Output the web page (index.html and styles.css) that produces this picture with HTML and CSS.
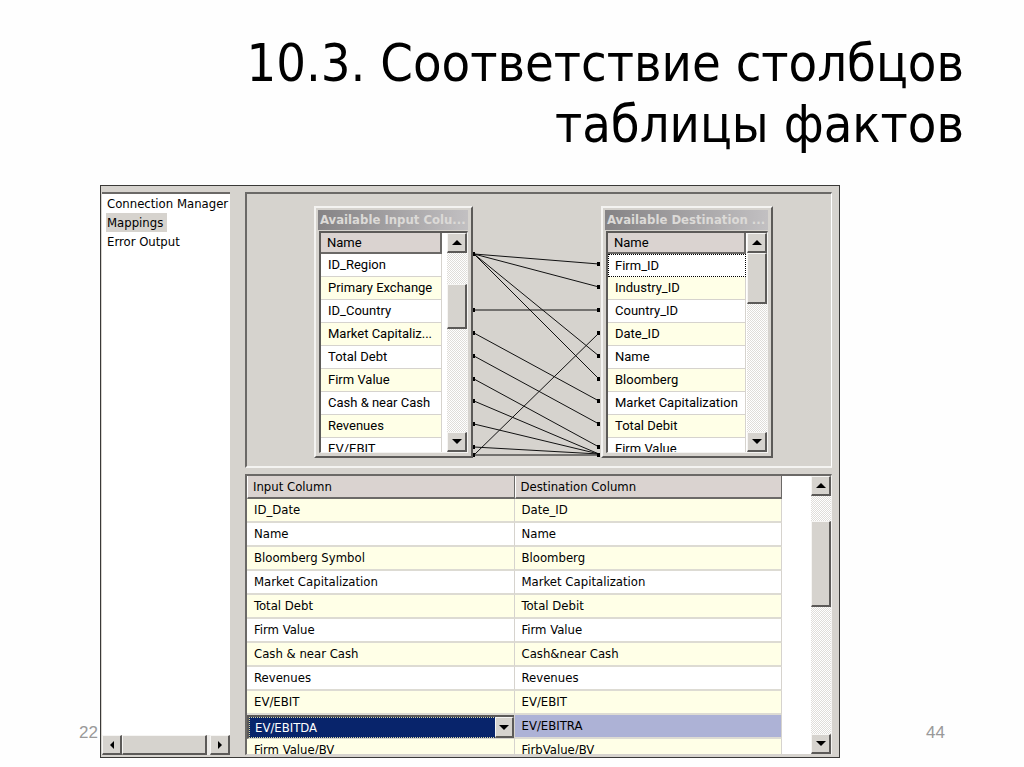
FILE: index.html
```html
<!DOCTYPE html>
<html lang="ru">
<head>
<meta charset="utf-8">
<title>10.3. Соответствие столбцов таблицы фактов</title>
<link rel="stylesheet" href="styles.css">
</head>
<body>
<main class="slide">
  <h1 class="title">10.3. Соответствие столбцов<br>таблицы фактов</h1>
  <div class="stage">
    <span class="mark mark-left">22</span>
    <section class="editor">
      <div class="side">
        <nav class="pages">
          <a href="#">Connection Manager</a>
          <a href="#" class="current">Mappings</a>
          <a href="#">Error Output</a>
        </nav>
        <div class="hscroll">
          <button class="sb" aria-label="Scroll left"><svg width="6" height="8" viewBox="0 0 6 8"><path d="M5 0v8L1 4z"/></svg></button>
          <span class="thumb"></span>
          <button class="sb" aria-label="Scroll right"><svg width="6" height="8" viewBox="0 0 6 8"><path d="M1 0v8l4-4z"/></svg></button>
        </div>
      </div>
      <div class="work">
        <div class="diagram">
          <div class="win win-input">
            <div class="caption">Available Input Colu...</div>
            <div class="list">
              <table class="names">
                <tr><th>Name</th></tr>
                <tr><td>ID_Region</td></tr>
                <tr><td>Primary Exchange</td></tr>
                <tr><td>ID_Country</td></tr>
                <tr><td>Market Capitaliz...</td></tr>
                <tr><td>Total Debt</td></tr>
                <tr><td>Firm Value</td></tr>
                <tr><td>Cash &amp; near Cash</td></tr>
                <tr><td>Revenues</td></tr>
                <tr><td>EV/EBIT</td></tr>
              </table>
              <div class="vscroll">
                <button class="sb" aria-label="Scroll up"><svg width="10" height="5" viewBox="0 0 10 5"><path d="M0 5h10L5 0z"/></svg></button>
                <span class="thumb thumb-mid"></span>
                <button class="sb sb-end" aria-label="Scroll down"><svg width="10" height="5" viewBox="0 0 10 5"><path d="M0 0h10L5 5z"/></svg></button>
              </div>
            </div>
          </div>
          <svg class="wires" width="128" height="252" viewBox="0 0 128 252">
            <g class="line">
              <path d="M1 48L126 58M1 48L126 81M1 48L126 150M1 48L126 173M1 104H126M1 127L126 195M1 150L126 218M1 173L126 241M1 195L126 248M1 218L126 248M1 241L126 248M1 249H126M1 249L126 127"/>
            </g>
            <path d="M0 46h2v4H0zM0 102h2v4H0zM0 125h2v4H0zM0 148h2v4H0zM0 171h2v4H0zM0 193h2v4H0zM0 216h2v4H0zM0 239h2v4H0zM0 247h2v4H0zM124 56h3v4h-3zM124 79h3v4h-3zM124 102h3v4h-3zM124 125h3v4h-3zM124 148h3v4h-3zM124 171h3v4h-3zM124 193h3v4h-3zM124 216h3v4h-3zM124 239h3v4h-3zM124 247h3v4h-3z"/>
          </svg>
          <div class="win win-dest">
            <div class="caption">Available Destination ...</div>
            <div class="list">
              <table class="names">
                <tr><th>Name</th></tr>
                <tr><td class="focus">Firm_ID</td></tr>
                <tr><td>Industry_ID</td></tr>
                <tr><td>Country_ID</td></tr>
                <tr><td>Date_ID</td></tr>
                <tr><td>Name</td></tr>
                <tr><td>Bloomberg</td></tr>
                <tr><td>Market Capitalization</td></tr>
                <tr><td>Total Debit</td></tr>
                <tr><td>Firm Value</td></tr>
              </table>
              <div class="vscroll">
                <button class="sb" aria-label="Scroll up"><svg width="10" height="5" viewBox="0 0 10 5"><path d="M0 5h10L5 0z"/></svg></button>
                <span class="thumb thumb-top"></span>
                <button class="sb sb-end" aria-label="Scroll down"><svg width="10" height="5" viewBox="0 0 10 5"><path d="M0 0h10L5 5z"/></svg></button>
              </div>
            </div>
          </div>
        </div>
        <div class="grid">
          <table class="map">
            <thead><tr><th>Input Column</th><th>Destination Column</th></tr></thead>
            <tbody>
              <tr><td>ID_Date</td><td>Date_ID</td></tr>
              <tr><td>Name</td><td>Name</td></tr>
              <tr><td>Bloomberg Symbol</td><td>Bloomberg</td></tr>
              <tr><td>Market Capitalization</td><td>Market Capitalization</td></tr>
              <tr><td>Total Debt</td><td>Total Debit</td></tr>
              <tr><td>Firm Value</td><td>Firm Value</td></tr>
              <tr><td>Cash &amp; near Cash</td><td>Cash&amp;near Cash</td></tr>
              <tr><td>Revenues</td><td>Revenues</td></tr>
              <tr><td>EV/EBIT</td><td>EV/EBIT</td></tr>
              <tr class="active">
                <td><div class="combo"><select aria-label="Input Column"><option>EV/EBITDA</option></select><span class="drop"><svg width="10" height="5" viewBox="0 0 10 5"><path d="M0 0h10L5 5z"/></svg></span></div></td>
                <td>EV/EBITRA</td>
              </tr>
              <tr><td>Firm Value/BV</td><td>FirbValue/BV</td></tr>
            </tbody>
          </table>
          <div class="vscroll">
            <button class="sb" aria-label="Scroll up"><svg width="10" height="5" viewBox="0 0 10 5"><path d="M0 5h10L5 0z"/></svg></button>
            <span class="thumb thumb-grid"></span>
            <button class="sb sb-end" aria-label="Scroll down"><svg width="10" height="5" viewBox="0 0 10 5"><path d="M0 0h10L5 5z"/></svg></button>
          </div>
        </div>
      </div>
    </section>
    <span class="mark mark-right">44</span>
  </div>
</main>
</body>
</html>
```
FILE: styles.css
```css
* { box-sizing: border-box; }
body {
  margin: 0;
  background: #fefefe;
  color: #000;
  font-family: "DejaVu Sans Condensed", "DejaVu Sans", sans-serif;
  font-stretch: condensed;
  font-size: 13px;
  line-height: 16px;
}
.slide { padding: 33px 0 8px; }
.title {
  margin: 0 60px 30px 0;
  text-align: right;
  font-weight: 400;
  font-size: 52px;
  line-height: 61px;
}
.stage {
  display: grid;
  grid-template-columns: 100px minmax(0, 1fr) 184px;
  align-items: end;
}
.mark {
  font: 17px/20px "Liberation Sans", sans-serif;
  color: #999;
  padding-bottom: 15px;
}
.mark-left { text-align: right; padding-right: 2px; }
.mark-right { padding-left: 86px; }

.editor {
  display: flex;
  gap: 15px;
  padding: 6px 7px 2px 1px;
  background: #d6d3ce;
  border: 1px solid #3a3937;
}
.side {
  flex: none;
  width: 128px;
  display: flex;
  flex-direction: column;
  justify-content: space-between;
  background: #fff;
  border-top: 2px solid #6b6967;
}
.pages {
  display: flex;
  flex-direction: column;
  align-items: flex-start;
  white-space: nowrap;
  padding: 0 0 0 4px;
}
.pages a {
  color: #000;
  text-decoration: none;
  line-height: 19px;
  padding: 0 2px 0 1px;
}
.pages .current { background: #d6d3ce; padding-right: 4px; }

.hscroll { display: flex; height: 20px; background: #eceae7; }
.hscroll .thumb { flex: 1; margin-right: 3px; }
.thumb, .sb {
  display: block;
  background: #d6d3ce;
  border: 1px solid #f6f5f3;
  border-right: 2px solid #5c5a58;
  border-bottom: 2px solid #5c5a58;
}
.sb {
  flex: none;
  width: 20px;
  height: 20px;
  padding: 0;
  display: grid;
  place-items: center;
}
.vscroll {
  flex: none;
  width: 20px;
  display: flex;
  flex-direction: column;
  background: repeating-conic-gradient(#fff 0 25%, #dfddd9 0 50%) 0 0 / 2px 2px;
}
.sb-end { margin-top: auto; }
.thumb-mid { height: 45px; margin-top: 31px; }
.thumb-top { height: 51px; }
.thumb-grid { height: 86px; margin-top: 25px; }

.work {
  flex: 1;
  min-width: 0;
  display: flex;
  flex-direction: column;
  gap: 6px;
}
.diagram {
  display: flex;
  align-items: flex-start;
  padding: 12px 0 8px 67px;
  border: 2px solid #6b6967;
  border-right: 1px solid #fff;
  border-bottom: 2px solid #f4f3f1;
}
.win {
  flex: none;
  padding: 2px 3px 3px 2px;
  background: #d6d3ce;
  border: 2px solid #f4f3f1;
  border-right: 2px solid #5c5a58;
  border-bottom: 2px solid #5c5a58;
}
.win-input { width: 159px; }
.win-dest { width: 172px; }
.caption {
  height: 20px;
  padding: 0 2px;
  overflow: hidden;
  white-space: nowrap;
  background: linear-gradient(90deg, #858385, #c2c0c2);
  color: #dcdad7;
  font-weight: 700;
  line-height: 20px;
}
.list {
  display: flex;
  justify-content: space-between;
  height: 222px;
  margin: 1px 0 0 1px;
  overflow: hidden;
  background: #fff;
  border: 2px solid #5c5a58;
  border-right: 1px solid #f4f3f1;
  border-bottom: 1px solid #f4f3f1;
}
table { border-collapse: separate; border-spacing: 0; }
th, td { text-align: left; font-weight: 400; white-space: nowrap; }
.names {
  align-self: flex-start;
  width: 121px;
  font: 13px/16px Roboto, "Liberation Sans", sans-serif;
}
.win-dest .names { width: 135px; }
.names th {
  height: 21px;
  padding: 0 6px;
  background: #dad3d0;
  border-right: 2px solid #6b6967;
  border-bottom: 2px solid #6b6967;
}
.names td {
  height: 23px;
  padding: 0 7px;
  border-bottom: 1px solid #d6d3ce;
  border-right: 1px solid #d6d3ce;
}
.names tr:nth-child(odd) td { background: #ffffe7; }
.names .focus { border: 1px dotted #000; padding-left: 6px; }
.wires { flex: none; display: block; }
.line { fill: none; stroke: #111; stroke-width: 1; }

.grid {
  display: flex;
  justify-content: space-between;
  height: 281px;
  overflow: hidden;
  background: #fff;
  border: 2px solid #6b6967;
  border-right: 1px solid #f4f3f1;
  border-bottom: 1px solid #d6d3ce;
}
.map {
  flex: 1;
  align-self: flex-start;
  table-layout: fixed;
  margin-right: 29px;
}
.map th {
  height: 23px;
  padding: 0 5px;
  background: #dad3d0;
  border-left: 1px solid #fff;
  border-right: 1px solid #6b6967;
  border-bottom: 2px solid #6b6967;
}
.map td {
  height: 24px;
  padding: 0 7px;
  border-bottom: 2px solid #dddbd3;
  border-right: 1px solid #d6d3ce;
}
.map tbody tr:nth-child(odd) td { background: #ffffe7; }
.map .active td { background: #adb2d6; }
.map .active td:first-child { padding: 0; border-bottom: 0; }
.combo {
  position: relative;
  height: 24px;
  border: 2px solid #5c5a58;
  border-right: 0;
  border-bottom: 1px solid #d6d3ce;
}
.combo select {
  appearance: none;
  display: block;
  width: 100%;
  height: 21px;
  padding: 0 5px;
  border: 1px dotted #d8d6a0;
  border-radius: 0;
  background: #08246b;
  color: #fff;
  font: inherit;
}
.drop {
  position: absolute;
  top: 0;
  right: 0;
  width: 19px;
  height: 21px;
  display: grid;
  place-items: center;
  background: #d6d3ce;
  border: 1px solid #f6f5f3;
  border-right: 2px solid #5c5a58;
  border-bottom: 2px solid #5c5a58;
  pointer-events: none;
}
```
